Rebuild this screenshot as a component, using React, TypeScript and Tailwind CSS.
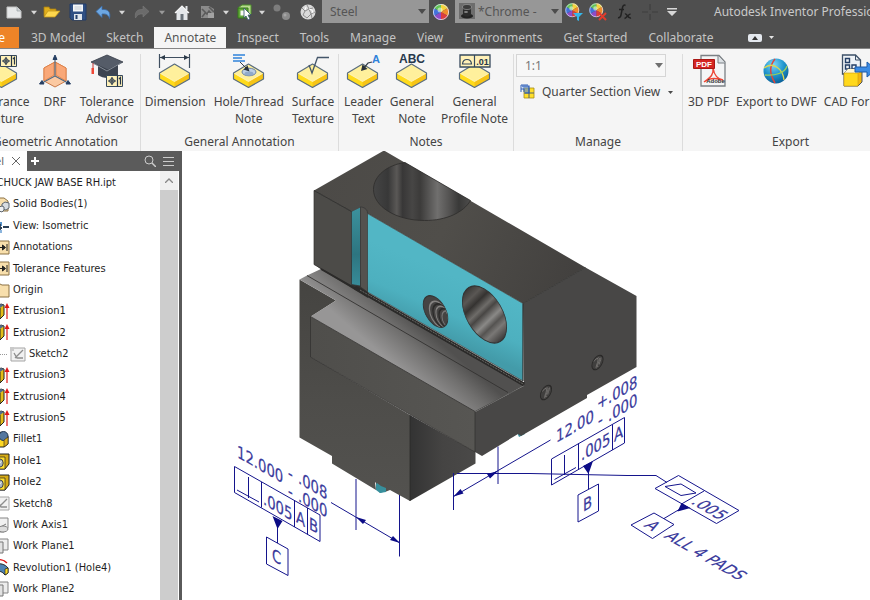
import React from 'react';

interface IconProps {
  className?: string;
}

const Caret: React.FC<IconProps> = ({ className = 'w-2 fill-[#d8d8d8]' }) => (
  <svg viewBox="0 0 8 5" className={`h-[5px] ${className}`}>
    <path d="M0 0h8L4 5z" />
  </svg>
);

const NewIcon = () => (
  <svg viewBox="0 0 18 18" className="h-[18px] w-[18px]">
    <path d="M2 4h10l4 4v7H2z" fill="#e6e8e9" stroke="#c4c4c4" />
    <path d="M12 4v4h4" fill="#cfd4d8" stroke="#9aa0a4" strokeWidth=".7" />
  </svg>
);

const OpenIcon = () => (
  <svg viewBox="0 0 18 18" className="h-[18px] w-[18px]">
    <path d="M1 13V4h5l1 2h6v3" fill="#e0ae1c" stroke="#a87f10" strokeWidth=".8" />
    <path d="M1 14 5 8h12l-5 6z" fill="#ffd84d" stroke="#c2941a" strokeWidth=".8" />
  </svg>
);

const SaveIcon = () => (
  <svg viewBox="0 0 18 18" className="h-[18px] w-[18px]">
    <path d="M1 1h16v16H3l-2-2z" fill="#2f4f83" stroke="#223c68" />
    <path d="M4 1.500h10v7H4z" fill="#f4f6f8" />
    <path d="M5.500 4h7M5.500 6h7" stroke="#b6c0cc" strokeWidth=".8" />
    <path d="M5 11h8v6H5z" fill="#dfe5ec" />
    <path d="M6.500 12h2v4h-2z" fill="#24406e" />
  </svg>
);

const UndoIcon = () => (
  <svg viewBox="0 0 18 18" className="h-[18px] w-[18px]">
    <path d="M1 8.500 7 3v3.500c6-.500 9 2.500 7.500 9C13.500 12 11.500 10.500 7 11v3.500z" fill="#6da7e2" stroke="#3a6ca8" strokeWidth=".8" />
  </svg>
);

const RedoIcon = () => (
  <svg viewBox="0 0 18 18" className="h-[18px] w-[18px]">
    <path d="M16 8.500 10 3v3.500C4 6 1.500 9 2.500 15 4 12 6 10.500 10 11v3z" fill="#6b6b6b" stroke="#7b7b7b" strokeWidth=".6" />
  </svg>
);

const HomeIcon = () => (
  <svg viewBox="0 0 18 18" className="h-[18px] w-[18px]">
    <path d="M3.500 9v8h11V9" fill="#e4e7ea" />
    <path d="M12.500 3h2v4h-2z" fill="#e4e7ea" />
    <path d="M2 10 9 3l7 7" fill="#e4e7ea" stroke="#f4f4f4" strokeWidth="1.200" />
    <path d="M7.500 11h3v6h-3z" fill="#6a727a" />
  </svg>
);

const UpdateIcon = () => (
  <svg viewBox="0 0 18 18" className="h-[18px] w-[18px]">
    <path d="M2 3h8l5 3v9H2z" fill="#8b8b8b" />
    <path d="m3 6 5 5 2-3 5 6M3 14l4-5M10 4l5 5" fill="none" stroke="#5b5b5b" strokeWidth="1.600" />
    <path d="M9 10h6v5H9z" fill="#a2a2a2" />
  </svg>
);

const SelectIcon = () => (
  <svg viewBox="0 0 18 18" className="h-[18px] w-[18px]">
    <path d="m3 5 4-3h9v9l-3 3z" fill="#b9dc90" stroke="#4f942b" />
    <path d="M3 5h10v10H3z" fill="#62a83a" stroke="#357a19" />
    <path d="M5.500 7.500h4v5h-4z" fill="#f7fbf4" />
    <path d="m9 5 7 7h-3l2 4-2 1-2-4-2 2z" fill="#fff" stroke="#31506b" strokeWidth=".8" />
  </svg>
);

const JointIcon = () => (
  <svg viewBox="0 0 20 18" className="h-[18px] w-5">
    <circle cx="5" cy="5" r="3.500" fill="#7d7d7d" />
    <circle cx="14" cy="13" r="4" fill="#8b8b8b" />
    <circle cx="13" cy="12" r="1.500" fill="#a5a5a5" />
  </svg>
);

const MaterialIcon = () => (
  <svg viewBox="0 0 18 18" className="h-[18px] w-[18px]">
    <circle cx="9" cy="9" r="7.500" fill="#d9d9d9" />
    <path d="m3 5 3 3-2 4 4 3M8 2l2 4 4-1M6 8l4-2 2 5-4 4M12 11l4-2M12 11l1 4" fill="none" stroke="#8d8d8d" />
    <path d="m10 6 3 1 1 3M7 4l-1 3" stroke="#fff" fill="none" />
  </svg>
);

const Wheel: React.FC<{ badge?: 'filter' | 'clear' }> = ({ badge }) => (
  <svg viewBox="0 0 18 18" className="h-[18px] w-[18px]">
    <g transform={badge ? 'translate(-.5 -.5) scale(.86)' : undefined}>
      <path d="M9 9V1A8 8 0 0 1 15.900 5z" fill="#f4d43c" />
      <path d="M9 9l6.900-4a8 8 0 0 1 0 8z" fill="#f08a2c" />
      <path d="M9 9l6.900 4A8 8 0 0 1 9 17z" fill="#dc3d3d" />
      <path d="M9 9v8a8 8 0 0 1-6.900-4z" fill="#8d4cc8" />
      <path d="M9 9l-6.900 4a8 8 0 0 1 0-8z" fill="#4272dc" />
      <path d="M9 9 2.100 5A8 8 0 0 1 9 1z" fill="#62c455" />
      <circle cx="9" cy="9" r="7.600" fill="none" stroke="#dfe5f5" strokeWidth=".8" />
      <circle cx="8" cy="7" r="2.500" fill="#fff" opacity=".5" />
    </g>
    {badge === 'filter' && <path d="M8 10h10l-4 4v4l-2-1v-3z" fill="#35b7ea" />}
    {badge === 'clear' && <path d="m10 10 7 7m0-7-7 7" stroke="#e23c2c" strokeWidth="2" />}
  </svg>
);

const ParameterIcon = () => (
  <svg viewBox="0 0 18 18" className="h-[18px] w-[18px]" fill="none" stroke="#222" strokeWidth="1.500">
    <path d="M10.500 2.500C8 1 7.500 4 7 7l-1 5c-.4 2-1.500 3-3 2.500M4 6.500h5" />
    <path d="M10 11c2-1 3 5 6 4M15.500 11c-2 0-4 4-6 4.500" />
  </svg>
);

const PointIcon = () => (
  <svg viewBox="0 0 18 18" className="h-[18px] w-[18px]" stroke="#3f3f3f" strokeWidth="1.200">
    <path d="M1 9h6m4 0h6M9 1v6m0 4v6" />
  </svg>
);

/* Yellow isometric plate shared by most ribbon commands */
const Plate = () => (
  <>
    <path d="m1.500 19 15-9 15 9v6l-15 8.500-15-8.500z" fill="#f6c416" />
    <path d="m1.500 19 15 8.500v6l-15-8.500z" fill="#ffdb1c" />
    <path d="m1.500 19 15-9 15 9-15 8.500z" fill="#fff09c" />
    <path d="m1.500 19 15-9 15 9v6l-15 8.500-15-8.500z" fill="none" stroke="#5a6e82" strokeWidth="1.200" strokeLinejoin="round" />
    <path d="m2.500 19.500 14 8 14-8" fill="none" stroke="#fff7c8" strokeWidth=".8" />
  </>
);

/* Feature control frame with a position symbol */
const Frame = () => (
  <>
    <path d="M.5.500h16v11H.5z" fill="#fff1b8" stroke="#36495c" />
    <path d="M11.500.500v11M13 4l1.500-1.500v7M2 6h8M6 2v8" stroke="#26364a" fill="none" strokeWidth="1.200" />
    <circle cx="6" cy="6" r="2.300" fill="none" stroke="#26364a" />
  </>
);

const iconClass = 'h-9 w-[34px] overflow-visible';

const ToleranceFeatureIcon = () => (
  <svg viewBox="0 0 34 36" className={iconClass}>
    <Plate />
    <path d="M10 17V7h6" stroke="#3d4f60" fill="none" />
    <g transform="translate(15 1)">
      <Frame />
    </g>
  </svg>
);

const DrfIcon = () => (
  <svg viewBox="0 0 34 36" className={iconClass}>
    <path d="m17 8 11 6v13l-11 6-11-6V14z" fill="#fbc9a2" stroke="#c97a4a" />
    <path d="M16 8.500v12.500L6 27V14zM18 8.500v12.500L28 27V14z" fill="#f9a878" stroke="#e07c40" strokeWidth=".8" />
    <path d="M17 4v18L4 29M17 22l13 7" fill="none" stroke="#52697f" strokeWidth="1.200" />
    <path d="m17 1 2 4.500h-4zM1.500 30l2.500-3.500 2 3.500zM32.500 30 30 26.500 28 30z" fill="#263f63" stroke="#263f63" />
  </svg>
);

const AdvisorIcon = () => (
  <svg viewBox="0 0 34 36" className={iconClass}>
    <path d="M8 10v11c5 4 14 4 20 0V10z" fill="#3d4450" />
    <path d="m1 8 16-7 16 7-15 8z" fill="#555c68" stroke="#363c47" strokeWidth=".8" />
    <path d="m3 9 14 8 14-8" stroke="#858c96" fill="none" />
    <path d="M3 9v7" stroke="#b33" />
    <path d="M1.500 14H4v6H1.500z" fill="#ef4735" />
    <g transform="translate(16 21)">
      <Frame />
    </g>
  </svg>
);

const DimensionIcon = () => (
  <svg viewBox="0 0 34 36" className={iconClass}>
    <Plate />
    <path d="M1.500 0v14M31.500 0v14M2 3.500h29" stroke="#3f4f60" strokeWidth="1.200" />
    <path d="m2 3.500 5-2.500v5zM31 3.500 26 1v5z" fill="#2d3b4a" />
  </svg>
);

const HoleNoteIcon = () => (
  <svg viewBox="0 0 34 36" className={iconClass}>
    <Plate />
    <ellipse cx="17" cy="18" rx="7" ry="3.800" fill="#bccfe6" stroke="#6b83a3" />
    <ellipse cx="17" cy="19.500" rx="4.500" ry="2" fill="#90aacb" />
    <path d="M1 1h12M1 4h9M1 7h12" stroke="#2f82da" strokeWidth="1.500" />
    <path d="m8 8 7 7" stroke="#333d48" />
    <path d="m17.500 17.500-6-2 4-4z" fill="#27313c" />
  </svg>
);

const SurfaceIcon = () => (
  <svg viewBox="0 0 34 36" className={iconClass}>
    <Plate />
    <path d="m13 11 3 8 5.500-15.500H33" fill="none" stroke="#44566a" strokeWidth="1.300" />
  </svg>
);

const LeaderIcon = () => (
  <svg viewBox="0 0 34 36" className={iconClass}>
    <Plate />
    <path d="m17 15 5-6 4-1" stroke="#333d48" strokeWidth="1.200" fill="none" />
    <path d="m15 17 1.500-6.500 5 4.500z" fill="#27313c" />
    <text x="26" y="9" className="fill-[#2f82da] font-['Liberation_Sans'] text-[11px] font-bold">A</text>
  </svg>
);

const GeneralNoteIcon = () => (
  <svg viewBox="0 0 34 36" className={iconClass}>
    <Plate />
    <text x="17" y="9" textAnchor="middle" className="fill-[#27384c] font-['Liberation_Sans'] text-[12px] font-bold">ABC</text>
  </svg>
);

const ProfileNoteIcon = () => (
  <svg viewBox="0 0 34 36" className={iconClass}>
    <Plate />
    <path d="M2 1h30v12H2z" fill="#fff1b8" stroke="#36495c" strokeWidth="1.300" />
    <path d="M16.500 1v12M4.500 10h9c-.500-6-8.500-6-9 0z" fill="none" stroke="#36495c" strokeWidth="1.200" />
    <text x="24.500" y="10.500" textAnchor="middle" className="fill-[#26364a] font-['Liberation_Sans'] text-[9px] font-bold">.01</text>
  </svg>
);

const PdfIcon = () => (
  <svg viewBox="0 0 34 36" className={iconClass}>
    <path d="M9 1.500h18l6 6.500v24H9z" fill="#f4f5f6" stroke="#7b8085" strokeWidth="1.300" />
    <path d="M26 2v7h7" fill="#dce1e5" stroke="#7b8085" />
    <path d="M21 14c1 8-4 10-9 14 6-5 13-4 19-2-6-1-9-6-10-12z" fill="none" stroke="#ee4636" strokeWidth="1.400" />
    <path d="M1.500 5.500h21v9h-21z" fill="#d42622" stroke="#a81815" />
    <text x="12" y="13" textAnchor="middle" className="fill-white font-['Liberation_Sans'] text-[8px] font-bold">PDF</text>
    <text x="23.500" y="28.500" textAnchor="middle" className="fill-[#333] font-['Liberation_Sans'] text-[6px] font-bold">Adobe</text>
  </svg>
);

const GlobeIcon = () => (
  <svg viewBox="0 0 34 36" className={iconClass}>
    <defs>
      <radialGradient id="globe" cx=".4" cy=".25" r=".8">
        <stop offset="0" stopColor="#7fd6f6" />
        <stop offset=".5" stopColor="#2398d0" />
        <stop offset="1" stopColor="#075a92" />
      </radialGradient>
    </defs>
    <circle cx="17" cy="17" r="12.500" fill="url(#globe)" />
    <path d="M16 5c-6 7-5 16 0 24" fill="none" stroke="#e0453a" strokeWidth="1.500" />
    <path d="M5 14c9-7 19 1 20 12" fill="none" stroke="#dcd850" strokeWidth="1.300" />
    <path d="M6 21c10 1 20-2 22-9" fill="none" stroke="#9bd05c" strokeWidth="1.300" />
  </svg>
);

const CadIcon = () => (
  <svg viewBox="0 0 34 36" className={iconClass}>
    <path d="M1.500 1h13l5 5v14h-18z" fill="#eef2f6" stroke="#3d5068" strokeWidth="1.300" />
    <path d="M14.500 1v5h5" fill="none" stroke="#3d5068" />
    <path d="M4.500 4.500h4v4h-4zM4.500 11h4v4h-4zM11 11h4v4h-4z" fill="none" stroke="#243f66" strokeWidth="1.400" />
    <path d="m3 19 4-4h14v13l-4 4H3z" fill="#f3b70f" stroke="#4a5564" />
    <path d="m3 19 4-4h14l-4 4z" fill="#fff6d0" />
    <path d="M3 19h14v13H3z" fill="#ffd81c" stroke="#c99a10" strokeWidth=".6" />
    <path d="M14 13h12V8l9 7.500-9 7.500v-5H14z" fill="#3b8be4" stroke="#1c5ba8" />
  </svg>
);

const SectionIcon = () => (
  <svg viewBox="0 0 16 16" className="h-4 w-4">
    <path d="M4 4h10v10H4z" fill="#ffdf2a" stroke="#a58b18" strokeWidth=".8" />
    <path d="M9 4v10M4 9h10" stroke="#52606c" />
    <path d="M2 2h7v7H5" fill="#4f83da" fillOpacity=".6" stroke="#2d5eb8" strokeWidth="1.200" />
    <path d="M1 8V1h7M1 5h3v3" stroke="#2d5eb8" fill="none" />
  </svg>
);

const QuickButton: React.FC<{ label: string; className: string; children: React.ReactNode }> = ({
  label,
  className,
  children,
}) => (
  <button aria-label={label} className={`flex h-6 shrink-0 items-center justify-center ${className}`}>
    {children}
  </button>
);

const TitleBar = () => (
  <div className="flex h-6 shrink-0 items-center overflow-hidden bg-[#4f4f4f] text-xs">
    <QuickButton label="New" className="w-7"><NewIcon /></QuickButton>
    <QuickButton label="New options" className="w-3"><Caret className="w-[6px] fill-[#d8d8d8]" /></QuickButton>
    <QuickButton label="Open" className="w-6"><OpenIcon /></QuickButton>
    <QuickButton label="Save" className="w-7"><SaveIcon /></QuickButton>
    <QuickButton label="Undo" className="w-6"><UndoIcon /></QuickButton>
    <QuickButton label="Undo options" className="w-3"><Caret className="w-[6px] fill-[#d8d8d8]" /></QuickButton>
    <QuickButton label="Redo" className="w-7"><RedoIcon /></QuickButton>
    <QuickButton label="Redo options" className="w-3"><Caret className="w-[6px] fill-[#9a9a9a]" /></QuickButton>
    <QuickButton label="Home" className="w-7"><HomeIcon /></QuickButton>
    <QuickButton label="Update" className="w-6"><UpdateIcon /></QuickButton>
    <QuickButton label="Update options" className="w-3"><Caret className="w-[6px] fill-[#d8d8d8]" /></QuickButton>
    <QuickButton label="Select" className="w-6"><SelectIcon /></QuickButton>
    <QuickButton label="Select options" className="w-3"><Caret className="w-[6px] fill-[#d8d8d8]" /></QuickButton>
    <QuickButton label="Joint" className="w-7"><JointIcon /></QuickButton>
    <QuickButton label="Material" className="w-6"><MaterialIcon /></QuickButton>
    <div className="relative ml-0.5 h-[23px] w-[107px] shrink-0 self-start">
      <select aria-label="Material" className="h-full w-full appearance-none bg-[#979797] pl-2 text-[#555]">
        <option>Steel</option>
      </select>
      <Caret className="pointer-events-none absolute top-[9px] right-[3px] w-2 fill-[#4c4c4c]" />
    </div>
    <QuickButton label="Appearance" className="w-6"><Wheel /></QuickButton>
    <div className="relative ml-0.5 h-[23px] w-[107px] shrink-0 self-start">
      <select aria-label="Appearance" className="h-full w-full appearance-none bg-[#979797] pl-[23px] text-[#555]">
        <option>*Chrome -</option>
      </select>
      <svg viewBox="0 0 16 16" className="pointer-events-none absolute top-[3px] left-1 h-4 w-4">
        <path d="M0 0h16v16H0z" fill="#6d6d6d" />
        <ellipse cx="8" cy="13" rx="6" ry="2.500" fill="#222" />
        <path d="M4 5h8v7c-2 2-6 2-8 0z" fill="#2c2c2c" />
        <ellipse cx="8" cy="4" rx="4.500" ry="2.500" fill="#3c3c3c" stroke="#999" strokeWidth=".7" />
        <ellipse cx="7" cy="9" rx="2" ry="1" fill="#858585" />
      </svg>
      <Caret className="pointer-events-none absolute top-[9px] right-[3px] w-2 fill-[#4c4c4c]" />
    </div>
    <QuickButton label="Adjust" className="w-6"><Wheel badge="filter" /></QuickButton>
    <QuickButton label="Clear" className="w-6"><Wheel badge="clear" /></QuickButton>
    <QuickButton label="Parameters" className="w-7"><ParameterIcon /></QuickButton>
    <QuickButton label="Point" className="w-6"><PointIcon /></QuickButton>
    <QuickButton label="Customize" className="w-5">
      <svg viewBox="0 0 10 8" className="h-2 w-[10px] fill-[#d8d8d8]">
        <path d="M0 0h10v1.500H0zM0 3h10L5 8z" />
      </svg>
    </QuickButton>
    <h1 className="ml-8 whitespace-nowrap text-[#c9c9c9]">Autodesk Inventor Professional</h1>
  </div>
);

const tabs = [
  '3D Model', 'Sketch', 'Annotate', 'Inspect', 'Tools',
  'Manage', 'View', 'Environments', 'Get Started', 'Collaborate',
];

const TabBar = () => (
  <nav className="flex h-[25px] shrink-0 items-end gap-px overflow-hidden border-b border-[#858585] bg-[#4f4f4f] pt-[3px] text-xs text-[#c4c4c4]">
    <button className="mr-px flex h-full w-[19px] shrink-0 items-center justify-end bg-[#ee8427] pr-[14px] text-white">File</button>
    {tabs.map((tab) => (
      <button
        key={tab}
        className={
          tab === 'Annotate'
            ? 'h-full bg-[#f5f5f5] px-[10px] whitespace-nowrap text-[#555]'
            : 'h-full px-[10px] whitespace-nowrap'
        }
      >
        {tab}
      </button>
    ))}
    <button aria-label="Minimize ribbon" className="ml-6 flex h-full items-center gap-[7px]">
      <svg viewBox="0 0 14 8" className="h-2 w-[14px]">
        <rect width="14" height="8" rx="2" fill="#e4e8ee" />
        <path d="m4 6 3-4 3 4z" fill="#333" />
      </svg>
      <Caret className="w-[5px] fill-[#e4e4e4]" />
    </button>
  </nav>
);

const Command: React.FC<{ icon: React.ReactNode; lines: string[] }> = ({ icon, lines }) => (
  <button className="flex shrink-0 flex-col items-center leading-[17px] whitespace-nowrap">
    {icon}
    <span className="mt-[3px] block">
      {lines.map((line) => (
        <span key={line} className="block">{line}</span>
      ))}
    </span>
  </button>
);

const Group: React.FC<{ title: string; className: string; titleClass?: string; children: React.ReactNode }> = ({
  title,
  className,
  titleClass = 'justify-center',
  children,
}) => (
  <section className={`flex shrink-0 flex-col overflow-hidden border-r border-[#dcdcdc] ${className}`}>
    <div className="flex-1">{children}</div>
    <h2 className={`flex h-[18px] items-center whitespace-nowrap ${titleClass}`}>{title}</h2>
  </section>
);

const Ribbon = () => (
  <div className="flex h-[102px] shrink-0 overflow-hidden bg-[#f5f5f5] pt-[5px] text-xs text-[#444]">
    <Group title="Geometric Annotation" className="w-[141px]" titleClass="justify-end pr-[22px]">
      <div className="flex justify-end gap-2 pr-[6px]">
        <Command icon={<ToleranceFeatureIcon />} lines={['Tolerance', 'Feature']} />
        <Command icon={<DrfIcon />} lines={['DRF']} />
        <Command icon={<AdvisorIcon />} lines={['Tolerance', 'Advisor']} />
      </div>
    </Group>
    <Group title="General Annotation" className="w-[198px]">
      <div className="flex justify-center gap-2">
        <Command icon={<DimensionIcon />} lines={['Dimension']} />
        <Command icon={<HoleNoteIcon />} lines={['Hole/Thread', 'Note']} />
        <Command icon={<SurfaceIcon />} lines={['Surface', 'Texture']} />
      </div>
    </Group>
    <Group title="Notes" className="w-[175px]">
      <div className="flex justify-center gap-[7px]">
        <Command icon={<LeaderIcon />} lines={['Leader', 'Text']} />
        <Command icon={<GeneralNoteIcon />} lines={['General', 'Note']} />
        <Command icon={<ProfileNoteIcon />} lines={['General', 'Profile Note']} />
      </div>
    </Group>
    <Group title="Manage" className="w-[169px]">
      <div className="relative mr-4 ml-0.5">
        <select aria-label="Annotation scale" className="h-[23px] w-full appearance-none border border-[#d5d5d5] bg-[#f7f7f7] pl-2 text-[#777]">
          <option>1:1</option>
        </select>
        <Caret className="pointer-events-none absolute top-[9px] right-[3px] w-2 fill-[#707070]" />
      </div>
      <button className="mt-1 ml-[6px] flex h-[22px] items-center whitespace-nowrap">
        <SectionIcon />
        <span className="ml-[6px]">Quarter Section View</span>
        <Caret className="ml-2 w-[5px] fill-[#4a4a4a]" />
      </button>
    </Group>
    <Group title="Export" className="w-[216px]">
      <div className="flex gap-[7px] pl-[5px]">
        <Command icon={<PdfIcon />} lines={['3D PDF']} />
        <Command icon={<GlobeIcon />} lines={['Export to DWF']} />
        <Command icon={<CadIcon />} lines={['CAD Format']} />
      </div>
    </Group>
  </div>
);

type NodeKind =
  | 'solid' | 'view' | 'note' | 'folder' | 'extrude' | 'sketch'
  | 'fillet' | 'hole' | 'axis' | 'plane' | 'revolve';

interface TreeNode {
  label: string;
  kind: NodeKind;
  child?: boolean;
}

const nodes: TreeNode[] = [
  { label: 'Solid Bodies(1)', kind: 'solid' },
  { label: 'View: Isometric', kind: 'view' },
  { label: 'Annotations', kind: 'note' },
  { label: 'Tolerance Features', kind: 'note' },
  { label: 'Origin', kind: 'folder' },
  { label: 'Extrusion1', kind: 'extrude' },
  { label: 'Extrusion2', kind: 'extrude' },
  { label: 'Sketch2', kind: 'sketch', child: true },
  { label: 'Extrusion3', kind: 'extrude' },
  { label: 'Extrusion4', kind: 'extrude' },
  { label: 'Extrusion5', kind: 'extrude' },
  { label: 'Fillet1', kind: 'fillet' },
  { label: 'Hole1', kind: 'hole' },
  { label: 'Hole2', kind: 'hole' },
  { label: 'Sketch8', kind: 'sketch' },
  { label: 'Work Axis1', kind: 'axis' },
  { label: 'Work Plane1', kind: 'plane' },
  { label: 'Revolution1 (Hole4)', kind: 'revolve' },
  { label: 'Work Plane2', kind: 'plane' },
];

const glyphs: Record<NodeKind, React.ReactNode> = {
  folder: <path d="M0 2h6l2 1h7v12H0z" fill="#f8dfac" stroke="#8d7345" />,
  note: (
    <>
      <path d="M0 2h15v13H0z" fill="#f8dfac" stroke="#8d7345" />
      <path d="M5 8.500h6M13 5v7M8.500 6l3 2.500-3 2.500z" stroke="#222" fill="#222" />
    </>
  ),
  solid: (
    <>
      <path d="M0 2h10l4 3v10H0z" fill="#f8dfac" stroke="#8d7345" />
      <path d="m8 8 3-2 4 1v5l-3 2-4-1z" fill="#d8dde2" stroke="#5d6670" />
      <path d="m5 11 3-1 2 1v3l-2 2-3-1z" fill="#eef0f2" stroke="#5d6670" />
    </>
  ),
  view: (
    <>
      <path d="M0 4h8v4H0z" fill="#5592ca" />
      <path d="M9 9h6M6 6v7M2 10h6" stroke="#2c3f54" strokeWidth="1.800" />
      <path d="M3 12h5v3H3z" fill="#8bb4dc" />
    </>
  ),
  extrude: (
    <>
      <path d="m2 4 5-3 3 1v10l-4 4-4-1z" fill="#e2bc18" stroke="#222" />
      <path d="m2 4 5-3 3 1-4 3z" fill="#526c8c" />
      <path d="M6 5v11" stroke="#222" />
      <path d="M13 16V3" stroke="#e01818" strokeWidth="1.200" />
      <path d="m13 0 2.500 5h-5z" fill="#e01818" />
    </>
  ),
  sketch: (
    <>
      <path d="M1 2h14v13H1z" fill="#f1f1f1" stroke="#a5a5a5" />
      <path d="m5 12 8-8M4 7l3 5h6" stroke="#8d8d8d" fill="none" strokeWidth="1.300" />
      <path d="M0 1h4v4H0z" fill="#c9c9c9" />
    </>
  ),
  fillet: (
    <>
      <path d="M0 5c4-5 10-5 14 0v8l-4 3H0z" fill="#ffd924" stroke="#222" />
      <circle cx="9.500" cy="5" r="4.500" fill="#54779f" stroke="#233750" />
      <path d="M10 9v7l4-3V6z" fill="#e0ae18" stroke="#222" strokeWidth=".6" />
    </>
  ),
  hole: (
    <>
      <path d="m0 4 4-3h11v10l-4 5H0z" fill="#d6aa14" stroke="#222" />
      <path d="M0 4h11v12H0z" fill="#ffdf2c" stroke="#222" strokeWidth=".7" />
      <ellipse cx="6" cy="10" rx="3.200" ry="4" fill="#a7b5be" stroke="#444" />
      <path d="m4.500 12 3-4" stroke="#eee" />
    </>
  ),
  axis: (
    <>
      <path d="M1 1h13v10l-4 4H1z" fill="#f1f1f1" stroke="#858585" />
      <path d="M1 13 12 7" stroke="#777" />
      <ellipse cx="9" cy="12" rx="5" ry="3" fill="#ddd" stroke="#858585" />
    </>
  ),
  plane: (
    <>
      <path d="M5 1h9v11H5z" fill="#ededed" stroke="#858585" />
      <path d="M0 4h9v11H0z" fill="#e2e2e2" stroke="#777" />
    </>
  ),
  revolve: (
    <>
      <path d="M0 3c5-4 10-2 13 1" stroke="#e01818" fill="none" strokeWidth="1.400" />
      <path d="M0 5c6-1 11 0 14 4v5l-3 2c-3-4-6-4-11-4z" fill="#4f83b4" stroke="#222" />
      <path d="M11 10v6l3-2V9z" fill="#ffdc24" stroke="#222" strokeWidth=".7" />
    </>
  ),
};

const ModelBrowser = () => (
  <aside className="flex w-[182px] shrink-0 flex-col overflow-hidden border-r-[3px] border-[#5a5a5a] bg-white">
    <div className="flex h-5 shrink-0 items-center bg-[#5b5b5b]">
      <button className="flex h-full w-[27px] items-center justify-end gap-2 bg-white pr-[7px] text-[11px] text-[#666]">
        Model
        <svg viewBox="0 0 8 8" className="h-2 w-2 shrink-0 stroke-[#666]">
          <path d="m0 0 8 8m0-8L0 8" />
        </svg>
      </button>
      <button aria-label="Add panel" className="ml-1">
        <svg viewBox="0 0 8 8" className="h-2 w-2 stroke-white stroke-2">
          <path d="M0 4h8M4 0v8" />
        </svg>
      </button>
      <button aria-label="Search" className="ml-auto">
        <svg viewBox="0 0 12 12" className="h-3 w-3 fill-none stroke-[#ccc]">
          <circle cx="5" cy="5" r="4" />
          <path d="m8 8 4 4" strokeWidth="1.500" />
        </svg>
      </button>
      <button aria-label="Panel menu" className="mr-[5px] ml-[7px]">
        <svg viewBox="0 0 11 10" className="h-[10px] w-[11px] stroke-[#ccc]">
          <path d="M0 1.500h11M0 5.500h11M0 9.500h11" />
        </svg>
      </button>
    </div>
    <div className="flex min-h-0 flex-1">
      <div className="min-w-0 flex-1 overflow-hidden pt-0.5 font-['DejaVu_Sans_Condensed','DejaVu_Sans',sans-serif] text-[11px] text-[#1e1e1e]">
        <div className="flex h-[21px] w-[116px] items-center justify-end whitespace-nowrap">CHUCK JAW BASE RH.ipt</div>
        <ul className="grid h-[406px] auto-rows-fr">
          {nodes.map((node) => (
            <li key={node.label} className={`flex items-center whitespace-nowrap ${node.child ? '' : '-ml-[6px]'}`}>
              {node.child && <span className="mr-[3px] w-[7px] border-t border-dotted border-[#999]" />}
              <svg viewBox="0 0 16 17" className="mr-[3px] h-[17px] w-4 shrink-0">{glyphs[node.kind]}</svg>
              {node.label}
            </li>
          ))}
        </ul>
      </div>
      <div className="w-[18px] bg-[#cdcdcd]">
        <button aria-label="Scroll up" className="flex h-[19px] w-full items-center justify-center bg-[#f0f0f0]">
          <svg viewBox="0 0 8 5" className="h-[5px] w-2 fill-none stroke-[#888]">
            <path d="m0 5 4-4 4 4" strokeWidth="1.300" />
          </svg>
        </button>
      </div>
      <div className="w-px bg-white" />
    </div>
  </aside>
);

/* Text lying in the left, right and floor planes of the isometric view */
const LEFT = 'matrix(.866 .5 0 1';
const RIGHT = 'matrix(.866 -.5 0 1';
const FLOOR = 'matrix(.866 .5 -.866 .5';

const PlaneText: React.FC<{ plane: string; x: number; y: number; children: string }> = ({ plane, x, y, children }) => (
  <text transform={`${plane} ${x} ${y})`}>{children}</text>
);

const Viewport = () => (
  <main className="flex min-w-0 flex-1 bg-white">
    <svg viewBox="182 151 688 449" preserveAspectRatio="xMinYMin meet" className="min-w-0 flex-1">
      <defs>
        <linearGradient id="top" x1="314" y1="190" x2="560" y2="300" gradientUnits="userSpaceOnUse">
          <stop offset="0" stopColor="#4c4a47" />
          <stop offset=".5" stopColor="#504e4a" />
          <stop offset="1" stopColor="#43413f" />
        </linearGradient>
        <linearGradient id="bore">
          <stop offset="0" stopColor="#454545" />
          <stop offset=".15" stopColor="#383838" />
          <stop offset=".24" stopColor="#5a5856" />
          <stop offset=".3" stopColor="#383737" />
          <stop offset=".4" stopColor="#474645" />
          <stop offset=".48" stopColor="#3c3b3a" />
          <stop offset=".66" stopColor="#706f6e" />
          <stop offset=".8" stopColor="#4f4e4d" />
          <stop offset=".88" stopColor="#393938" />
          <stop offset="1" stopColor="#4e4d4c" />
        </linearGradient>
        <linearGradient id="bore2" x1=".1" y1=".2" x2=".9" y2=".8">
          <stop offset="0" stopColor="#3a3836" />
          <stop offset=".15" stopColor="#5a5754" />
          <stop offset=".27" stopColor="#353331" />
          <stop offset=".4" stopColor="#6e6c69" />
          <stop offset=".48" stopColor="#484644" />
          <stop offset=".62" stopColor="#8a8987" />
          <stop offset=".72" stopColor="#555351" />
          <stop offset=".82" stopColor="#7a7876" />
          <stop offset="1" stopColor="#3c3a39" />
        </linearGradient>
        <linearGradient id="cyan" x1="440" y1="270" x2="416" y2="326" gradientUnits="userSpaceOnUse">
          <stop offset="0" stopColor="#52b6c5" />
          <stop offset=".6" stopColor="#4db0bf" />
          <stop offset="1" stopColor="#439ba9" />
        </linearGradient>
        <linearGradient id="slot" x1="0" y1="0" x2="0" y2="1">
          <stop offset="0" stopColor="#3c929e" />
          <stop offset=".6" stopColor="#2d7580" />
          <stop offset="1" stopColor="#388c99" />
        </linearGradient>
        <linearGradient id="ledge" x1="425" y1="329" x2="394" y2="365" gradientUnits="userSpaceOnUse">
          <stop offset="0" stopColor="#51504f" />
          <stop offset=".4" stopColor="#706f6e" />
          <stop offset="1" stopColor="#979696" />
        </linearGradient>
        <linearGradient id="body" x1="0" y1="0" x2="0" y2="1">
          <stop offset="0" stopColor="#454441" />
          <stop offset=".55" stopColor="#4e4d4a" />
          <stop offset="1" stopColor="#53524f" />
        </linearGradient>
        <linearGradient id="lip">
          <stop offset="0" stopColor="#4f4e4b" />
          <stop offset="1" stopColor="#575653" />
        </linearGradient>
        <linearGradient id="under">
          <stop offset="0" stopColor="#333" />
          <stop offset=".5" stopColor="#454443" />
          <stop offset="1" stopColor="#4a4948" />
        </linearGradient>
        <clipPath id="threads">
          <circle r="14" />
        </clipPath>
      </defs>

      {/* Base of the jaw */}
      <g strokeLinejoin="round">
        <path d="m376 481 10 2v8l-6 2-4-3z" fill="#388f9c" />
        <path d="M516 430h9v4l-6 3z" fill="#388f9c" />
        <path d="M299.500 279.500 336 300.500l-25 16V357l99 58v86l-20-11-5 2-7-7-3-3 1 8-44-26.500V456l-32.500-18.500z" fill="url(#body)" />
        <path d="m377 483 4 3 5 2v4l-6 1-3-4z" fill="#388f9c" />
        <path d="M410 415 475.500 452v11.500L410 501z" fill="url(#under)" />
        <path d="M410 415v86" stroke="#2c2b2a" strokeWidth=".8" />
        <path d="m523 303.500 62.500-36 51 28.500v71L587 395v3l-66 38-3-2-36 22-7-4v-40l49-26z" fill="#484746" />
        <path d="m299.500 279.500 7.500-4 15-7 202 117-49 26.500-164.500-95.500 25.500-16z" fill="url(#ledge)" />
        <path d="m307 275.500 201 117" stroke="#333231" strokeWidth=".9" />
        <path d="m310.500 316.500 164.500 95V452l-164.500-95z" fill="url(#lip)" stroke="#333231" strokeWidth=".8" />
        <path d="M475 411.500 524 386" stroke="#333231" strokeWidth=".6" />
      </g>

      {/* Upper block */}
      <path d="m314 264 38-4 16 28v10l-46-28z" fill="#33322f" />
      <path d="M384 150.500 314 190.500l37.500 21 9-4.500 7 6.500L523 303.500l62.500-36z" fill="url(#top)" />
      <path d="m314 190.500 37.500 21V286L314 264.500z" fill="#4c4b48" stroke="#353432" strokeWidth=".7" />
      <path d="m351.500 211.500 9-4.500v79l-9-1.500z" fill="url(#slot)" stroke="#333" strokeWidth=".7" />
      <path d="M360.500 207c3 0 7 2 7 6v79l-7-5z" fill="#54524f" stroke="#333" strokeWidth=".7" />
      <path d="M367.500 213.500 523 303.500V381l-155.500-89z" fill="url(#cyan)" stroke="#3a3937" strokeWidth=".7" />
      <path d="M321 269 524 385" stroke="#2b2a29" strokeWidth="2" />
      <path d="m355 287.500 169 97" stroke="#2b2a29" strokeWidth="4" />
      <path d="m360 290 164 94.500" stroke="#696864" strokeWidth="1" strokeDasharray="2 1" />
      <path d="m314 190.500 37.500 21M523 303.500V381M523 303.500l62.500-36" fill="none" stroke="#2f2e2d" strokeWidth=".8" />
      <path d="M405 162.500c-18 2.500-31.500 13.500-31.500 27 0 17 22.500 31 51 31 22 0 39-8 46-20z" fill="url(#bore)" stroke="#2d2c2b" strokeWidth=".8" />

      {/* Bores on the cyan pad */}
      <circle r="25.500" transform="matrix(.866 .5 0 1 484.500 314.500)" fill="url(#bore2)" stroke="#333" />
      <g transform="matrix(.866 .5 0 1 435.500 311.500)">
        <circle r="14.200" fill="#454443" stroke="#333" />
        <g clipPath="url(#threads)" fill="none">
          <ellipse cx="4" cy="1" rx="11" ry="12" stroke="#858381" strokeWidth="1.500" />
          <ellipse cx="7" cy="1" rx="10" ry="11" stroke="#2b2a29" strokeWidth="1.500" />
          <ellipse cx="9.500" cy="1" rx="9" ry="10" stroke="#858381" strokeWidth="1.200" />
          <ellipse cx="12" cy="1" rx="8" ry="9" stroke="#2b2a29" strokeWidth="1.500" />
          <ellipse cx="14.500" cy="1" rx="7" ry="8" stroke="#777" strokeWidth="1.200" />
        </g>
      </g>
      {[[597.5, 362.5], [546, 392.5]].map(([x, y]) => (
        <g key={x} transform={`matrix(.866 -.5 0 1 ${x} ${y})`}>
          <circle r="6.500" fill="#403f3e" stroke="#292827" />
          <path d="M-4-3C-1-6 2-4 0 0s-2 5-1 5M-1-4c4-1 4 2 2 5s-2 4 0 3M4-3c0 3-2 4-2 6" fill="none" stroke="#7a7876" strokeWidth=".8" />
        </g>
      ))}

      {/* Annotation line work */}
      <g fill="none" stroke="#14148c" strokeWidth="1">
        <path d="m234.500 466.500 85.500 48.500v26.500l-85.500-49zM261.500 482v25.500M294.500 500.500V527M307.500 508v26.500" />
        <path d="M248.500 477v21M237 490l22 12" />
        <path d="M277.500 525v18M266.500 537l21.500 12v26.500L266.500 564z" />
        <path d="m331 502.500 69 40.500M356 479v51M399.500 495v61.500" />
        <path d="M453.500 473v37M498 446.500V484M453.500 496.500l97-56.500" />
        <path d="M457 473.500h73l97 2h29l11 7" />
        <path d="m551.500 459 73-41.500v25.500l-73 42zM578.500 443.500V470M612.500 424.500V450" />
        <path d="M564.500 455v20M554.500 479.500l21.500-12" />
        <path d="M588.500 470v19M578 495l20.500-11v27L578 522z" />
        <path d="m655 488.500 23.500-13 60.500 35-22.500 13zM704 491l-22.500 13" />
        <path d="m665 486.500 16-2.500 15 9-15 2.500z" />
        <path d="m680 509-16 9.500M631 525l23-12 20 11.500-21.500 14z" />
      </g>
      <g fill="#0c0c86">
        <path d="m272.500 516 10 5-5 8zM356 517l10 3-3 4zM400 543l-7-7-3 4zM453.500 496.500l10-3-3-4.500zM498 471l-11 3 3 4.500z" />
        <path d="m583 466 10-5-4.500 13zM681.500 503l9 5-13 3.500z" />
      </g>

      <g className="fill-[#3a3a9c] stroke-[#3a3a9c] font-['DejaVu_Sans_Condensed','DejaVu_Sans',sans-serif] text-[17px] [stroke-width:.2]">
        <PlaneText plane={LEFT} x={237} y={457}>12.000</PlaneText>
        <PlaneText plane={LEFT} x={288} y={478}>-</PlaneText>
        <PlaneText plane={LEFT} x={298} y={483}>.008</PlaneText>
        <PlaneText plane={LEFT} x={288} y={496}>-</PlaneText>
        <PlaneText plane={LEFT} x={298} y={501}>.000</PlaneText>
        <PlaneText plane={LEFT} x={263} y={504}>.005</PlaneText>
        <PlaneText plane={LEFT} x={296} y={522}>A</PlaneText>
        <PlaneText plane={LEFT} x={309} y={529}>B</PlaneText>
        <PlaneText plane={LEFT} x={272} y={560}>C</PlaneText>
        <PlaneText plane={RIGHT} x={556} y={443}>12.00</PlaneText>
        <PlaneText plane={RIGHT} x={597} y={410}>+</PlaneText>
        <PlaneText plane={RIGHT} x={608} y={404}>.008</PlaneText>
        <PlaneText plane={RIGHT} x={598} y={427}>-</PlaneText>
        <PlaneText plane={RIGHT} x={608} y={422}>.000</PlaneText>
        <PlaneText plane={RIGHT} x={581} y={461}>.005</PlaneText>
        <PlaneText plane={RIGHT} x={614} y={442}>A</PlaneText>
        <PlaneText plane={RIGHT} x={583} y={512}>B</PlaneText>
        <PlaneText plane={FLOOR} x={690} y={503}>.005</PlaneText>
        <PlaneText plane={FLOOR} x={643} y={526}>A</PlaneText>
        <PlaneText plane={FLOOR} x={663} y={537}>ALL 4 PADS</PlaneText>
      </g>
    </svg>
  </main>
);

const App: React.FC = () => {
  return (
    <div className="flex h-screen flex-col overflow-hidden bg-white font-['Noto_Sans',sans-serif]">
      <TitleBar />
      <TabBar />
      <Ribbon />
      <div className="flex min-h-0 flex-1">
        <ModelBrowser />
        <Viewport />
      </div>
    </div>
  );
};

export default App;
